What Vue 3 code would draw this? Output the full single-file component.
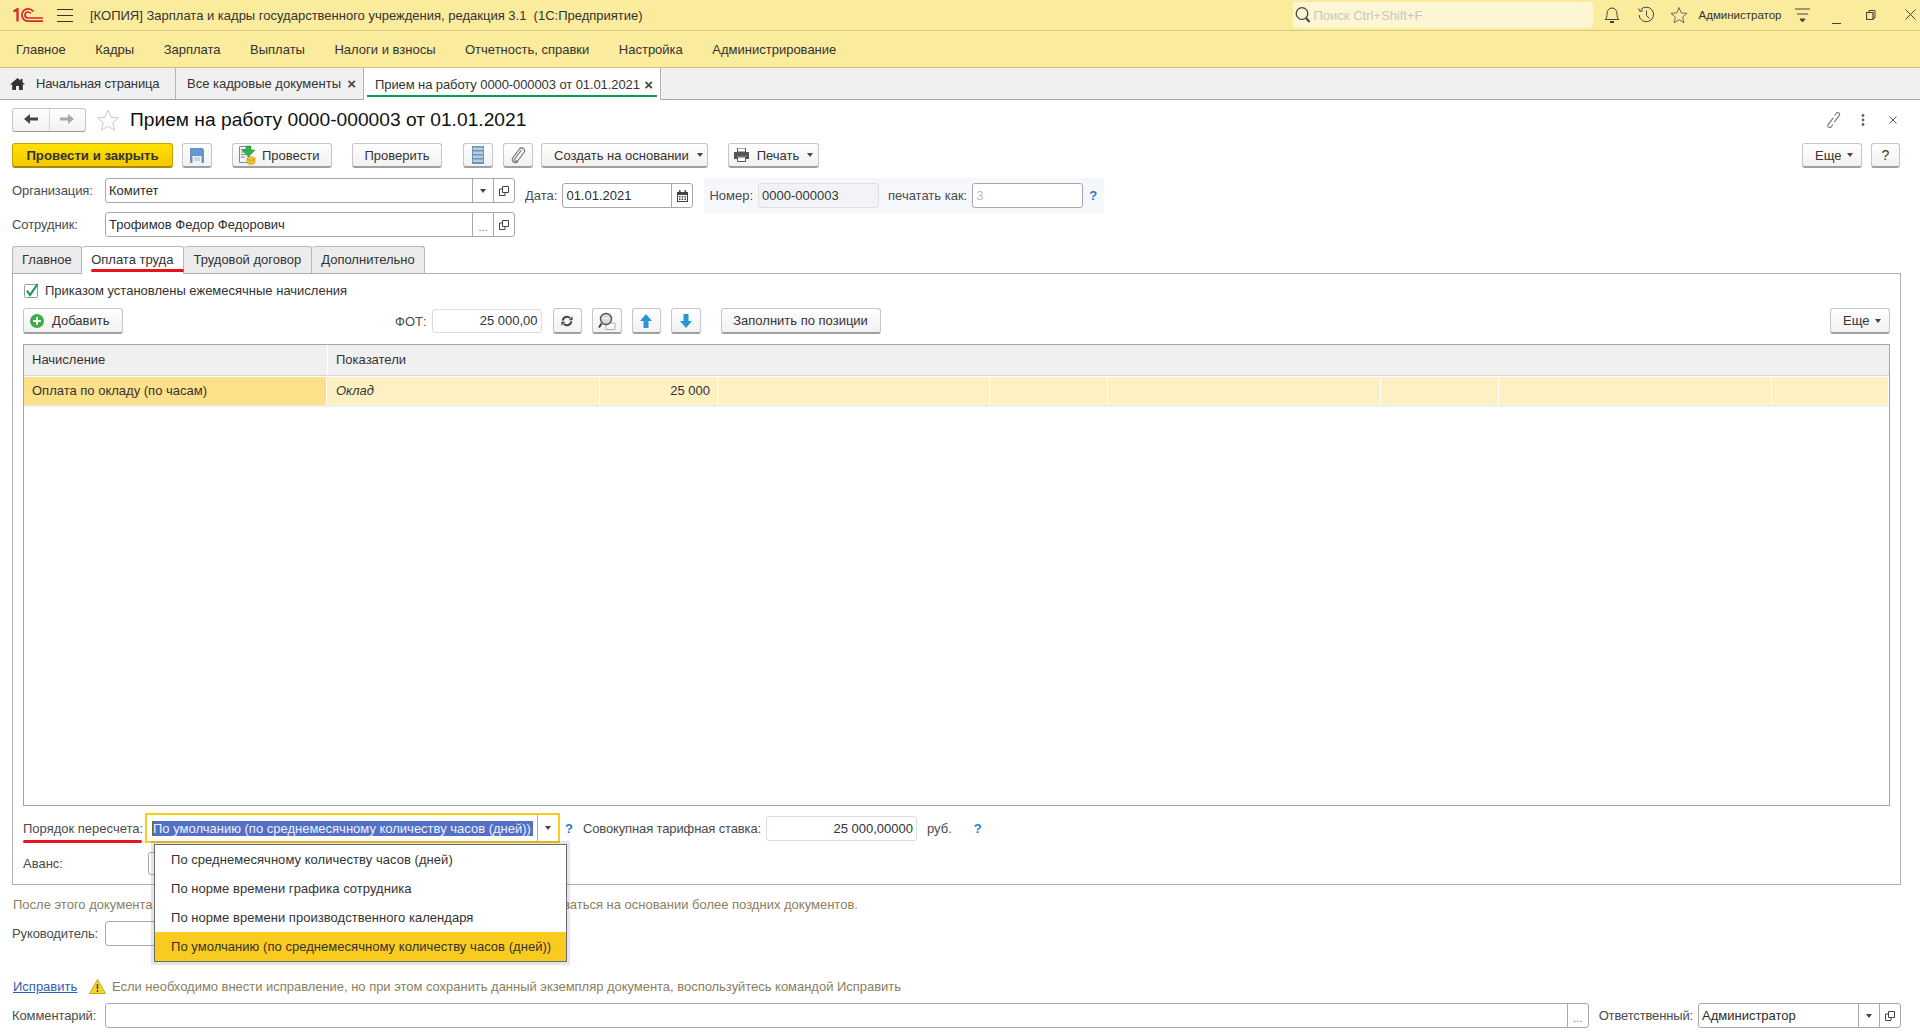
<script setup>
const menu = ['Главное', 'Кадры', 'Зарплата', 'Выплаты', 'Налоги и взносы', 'Отчетность, справки', 'Настройка', 'Администрирование']
const formTabs = ['Главное', 'Оплата труда', 'Трудовой договор', 'Дополнительно']
const rowCells = ['', '', '', '', '', '', '']
const options = [
  'По среднемесячному количеству часов (дней)',
  'По норме времени графика сотрудника',
  'По норме времени производственного календаря',
  'По умолчанию (по среднемесячному количеству часов (дней))'
]
</script>

<template>
  <svg class="sprite" width="0" height="0">
    <symbol id="copy" viewBox="0 0 12 12"><path d="M4.500 1.500h6v6h-6zM4.500 4H1.500v6.500H7V7.500" fill="none" stroke="#444" /></symbol>
    <symbol id="star" viewBox="0 0 24 24"><path d="M12 2l3 7.200 7.600.6-5.800 5 1.800 7.400L12 18.300l-6.600 3.900 1.800-7.400-5.800-5L9 9.200z" fill="none" stroke="currentColor" /></symbol>
  </svg>

  <div class="app">
    <header class="titlebar">
      <svg class="logo" width="30" height="14" viewBox="0 0 30 14" fill="none" stroke="#d9262c" stroke-width="1.700">
        <path d="M.5 3.500L4.500 1.200V13.500" stroke-width="2.300" />
        <path d="M20.500 3.500C19 1.600 17 .9 15 .9a6 6 0 0 0 0 12.200H30" />
        <path d="M18 5.500C17.200 4.500 16 4 15 4a3 3 0 0 0 0 6H30" />
      </svg>
      <div class="burger"><i></i><i></i><i></i></div>
      <div class="app-title">[КОПИЯ] Зарплата и кадры государственного учреждения, редакция 3.1 &nbsp;(1С:Предприятие)</div>
      <div class="search">
        <svg width="16" height="18" viewBox="0 0 16 18" fill="none" stroke="#444" stroke-width="1.300">
          <circle cx="7" cy="7.500" r="5.800" /><path d="M11 12l3.500 4" stroke-width="2" />
        </svg>
        <span>Поиск Ctrl+Shift+F</span>
      </div>
      <svg class="bell" width="16" height="18" viewBox="0 0 16 18" fill="none" stroke="#444">
        <path d="M1 13.500c2-1.500 2-3 2-6 0-3 2-5.500 5-5.500s5 2.500 5 5.500c0 3 0 4.500 2 6z" /><path d="M6 16h4" stroke-width="2" />
      </svg>
      <svg class="hist" width="18" height="18" viewBox="0 0 18 18" fill="none" stroke="#444">
        <path d="M3.500 4A7.300 7.300 0 1 1 2 9" /><path d="M1.500 2.500L3 5.500 6 4.500" /><path d="M9.500 4.500V9.500L12.500 12.500" />
      </svg>
      <svg class="tstar" width="18" height="18" style="color:#444"><use href="#star" /></svg>
      <span class="user">Администратор</span>
      <svg class="filter" width="16" height="18" viewBox="0 0 16 18" stroke="#444">
        <path d="M0 3h15M2 8h11" /><path d="M5 13h5l-2.500 3z" fill="#444" />
      </svg>
      <svg class="winbtn" width="9" height="18" viewBox="0 0 9 18"><path d="M0 17.500h9" stroke="#444" /></svg>
      <svg class="winbtn restore" width="10" height="18" viewBox="0 0 10 18" fill="none" stroke="#444">
        <path d="M3 6.500V4.500H9V12H7" /><path d="M.5 6.500H7V13.500H.5z" stroke-width="1.200" />
      </svg>
      <svg class="winbtn close" width="11" height="18" viewBox="0 0 11 18" stroke="#444"><path d="M.5 3.500l10 10M10.500 3.500l-10 10" /></svg>
    </header>

    <nav class="menubar">
      <span v-for="m in menu" :key="m">{{ m }}</span>
    </nav>

    <div class="pagetabs">
      <div class="ptab home">
        <svg width="15" height="14" viewBox="0 0 15 14" fill="#333"><path d="M7.500 1L0 7.500h2.200V13h3.800V9h3v4h3.800V7.500H15l-2.500-2.200V2h-2v1.600z" /></svg>
        <span>Начальная страница</span>
      </div>
      <div class="ptab">
        <span>Все кадровые документы</span><b class="x">×</b>
      </div>
      <div class="ptab active">
        <span>Прием на работу 0000-000003 от 01.01.2021</span><b class="x">×</b>
      </div>
    </div>

    <main class="form">
      <div class="head">
        <div class="navbtns">
          <button class="nav">
            <svg width="14" height="12" viewBox="0 0 14 12" fill="#444"><path d="M0 6l6-5v3.400h8v3.200H6V11z" /></svg>
          </button>
          <button class="nav">
            <svg width="14" height="12" viewBox="0 0 14 12" fill="#aaa"><path d="M14 6L8 1v3.400H0v3.200h8V11z" /></svg>
          </button>
        </div>
        <svg class="fav" width="24" height="24" style="color:#c9c9c9"><use href="#star" /></svg>
        <h1>Прием на работу 0000-000003 от 01.01.2021</h1>
        <div class="head-right">
          <svg width="18" height="18" viewBox="0 0 18 18" fill="none" stroke="#777" stroke-width="1.100">
            <path d="M9.500 4.500l2-2.500c1.200-1.200 3.200-.2 3.200 1.300 0 .5-.2 1-.5 1.400l-5 6.500" />
            <path d="M8 13.500l-2 2.500c-1.200 1.200-3.200.2-3.200-1.300 0-.5.2-1 .5-1.400l5-6.500" />
          </svg>
          <svg class="dots" width="4" height="12" viewBox="0 0 4 12" fill="#666"><circle cx="2" cy="1.500" r="1.400" /><circle cx="2" cy="6" r="1.400" /><circle cx="2" cy="10.500" r="1.400" /></svg>
          <svg class="hclose" width="8" height="8" viewBox="0 0 8 8" stroke="#555"><path d="M.5.500l7 7M7.500.500l-7 7" /></svg>
        </div>
      </div>

      <div class="cmdbar">
        <button class="btn primary">Провести и закрыть</button>
        <button class="btn icon save">
          <svg width="14" height="15" viewBox="0 0 14 15">
            <path d="M0 0h12.500L14 1.500V15H0z" fill="#6a94c0" /><path d="M2.500 1h8.500v5H2.500z" fill="#5e9bd8" /><path d="M2.500 8h9v7h-9z" fill="#eef2f6" /><path d="M4 10h6M4 12h6" stroke="#a9b8c8" />
          </svg>
        </button>
        <button class="btn post">
          <svg width="17" height="20" viewBox="0 0 17 20">
            <path d="M.5 1.500h9v16h-9z" fill="#f4f4f4" stroke="#888" />
            <path d="M2 4.500h6M2 7h4M2 9.500h5M2 12h4" stroke="#8a8a8a" />
            <path d="M7 1h5v4h4l-6.500 7L3 5h4z" fill="#32b04a" stroke="#1f8a35" stroke-width=".5" />
            <ellipse cx="12" cy="13.500" rx="4" ry="1.800" fill="#f2c63a" stroke="#b08b12" stroke-width=".5" />
            <path d="M8 13.500v4c0 1 1.800 1.800 4 1.800s4-.8 4-1.800v-4c0 1-1.800 1.800-4 1.800s-4-.8-4-1.800z" fill="#efc02e" stroke="#b08b12" stroke-width=".5" />
          </svg>
          <span>Провести</span>
        </button>
        <button class="btn check">Проверить</button>
        <button class="btn icon list">
          <svg width="12" height="18" viewBox="0 0 12 18">
            <path d="M0 0h12v18H0z" fill="#6f93b8" /><path d="M1 1.500h10v2.500H1zM1 5.500h10V8H1zM1 9.500h10V12H1zM1 13.500h10V16H1z" fill="#b8cde3" />
          </svg>
        </button>
        <button class="btn icon clip">
          <svg width="15" height="18" viewBox="0 0 15 18" fill="none" stroke="#777" stroke-width="1.200">
            <path d="M10.500 4L4 12.500c-1.500 2.200 1.300 4 3 2l6-8c2-3-2-6.500-4.500-3.500L2 11.500c-2.200 3.500 2 7 5 4" />
          </svg>
        </button>
        <button class="btn create">Создать на основании <i class="caret"></i></button>
        <button class="btn print">
          <svg width="15" height="14" viewBox="0 0 15 14">
            <path d="M3.500 0h8v4h-8z" fill="#fff" stroke="#555" /><path d="M0 4h15v7h-3V8.500H3V11H0z" fill="#555" /><path d="M3.500 9h8v4.500h-8z" fill="#fff" stroke="#555" />
          </svg>
          <span>Печать</span><i class="caret"></i>
        </button>
        <button class="btn more">Еще <i class="caret"></i></button>
        <button class="btn help">?</button>
      </div>

      <div class="fields">
        <div class="fields-left">
          <div class="frow">
            <label class="flabel">Организация:</label>
            <div class="input grow">
              <span class="val">Комитет</span>
              <span class="cell"><i class="caret"></i></span>
              <span class="cell"><svg width="12" height="12"><use href="#copy" /></svg></span>
            </div>
          </div>
          <div class="frow emp">
            <label class="flabel">Сотрудник:</label>
            <div class="input grow">
              <span class="val">Трофимов Федор Федорович</span>
              <span class="cell dots3">...</span>
              <span class="cell"><svg width="12" height="12"><use href="#copy" /></svg></span>
            </div>
          </div>
        </div>
        <div class="date">
          <label>Дата:</label>
          <div class="input date-in">
            <span class="val">01.01.2021</span>
            <span class="cell">
              <svg width="11" height="12" viewBox="0 0 11 12" fill="#444"><path d="M0 2h11v10H0zM1 5v6h9V5zM2 0h1.500v2H2zM7.500 0H9v2H7.500z" /><path d="M2 6h1.500v1.500H2zM4.700 6h1.500v1.500H4.700zM7.500 6H9v1.500H7.500zM2 8.500h1.500V10H2zM4.700 8.500h1.500V10H4.700zM7.500 8.500H9V10H7.500z" /></svg>
            </span>
          </div>
        </div>
        <div class="number">
          <label>Номер:</label>
          <div class="num-in">0000-000003</div>
          <label class="print-as">печатать как:</label>
          <div class="input print-in"><span class="val ghost">3</span></div>
          <span class="q">?</span>
        </div>
      </div>

      <div class="ftabs">
        <div v-for="(t, i) in formTabs" :key="t" class="ftab" :class="{ on: i === 1 }">{{ t }}</div>
      </div>

      <section class="panel">
        <div class="checkrow">
          <svg width="15" height="15" viewBox="0 0 15 15" fill="none">
            <rect x=".5" y="1.500" width="13" height="13" rx="1" stroke="#999" fill="#fff" />
            <path d="M3 7.500l3 4.500L13.500 1" stroke="#1d9a4f" stroke-width="2.200" />
          </svg>
          <span>Приказом установлены ежемесячные начисления</span>
        </div>

        <div class="tblbar">
          <button class="btn add">
            <svg width="14" height="14" viewBox="0 0 14 14"><circle cx="7" cy="7" r="7" fill="#3fae49" /><path d="M7 3.200v7.600M3.200 7h7.600" stroke="#fff" stroke-width="2" /></svg>
            <span>Добавить</span>
          </button>
          <label class="fot">ФОТ:</label>
          <div class="fot-in">25 000,00</div>
          <button class="btn icon first-tool">
            <svg width="12" height="12" viewBox="0 0 14 14" fill="none" stroke="#444" stroke-width="2.400">
              <path d="M2 6.500A5 5 0 0 1 10.500 3.500" /><path d="M12 7.500A5 5 0 0 1 3.500 10.500" />
              <path d="M9 6h4.500V1.500zM5 8H.5v4.500z" fill="#444" stroke="none" />
            </svg>
          </button>
          <button class="btn icon">
            <svg width="18" height="18" viewBox="0 0 18 18" fill="none">
              <path d="M8 11h9v6.500H8z" fill="#fff" stroke="#9cb5cc" />
              <circle cx="8" cy="7" r="5.500" fill="#d9d9d9" stroke="#555" stroke-width="1.400" />
              <path d="M3.500 11.500L1 15.500" stroke="#444" stroke-width="2" />
              <path d="M4.500 6.500h7" stroke="#fff" />
            </svg>
          </button>
          <button class="btn icon">
            <svg width="12" height="14" viewBox="0 0 12 14"><path d="M6 0l6 7H8.500v7h-5V7H0z" fill="#2b93d6" /></svg>
          </button>
          <button class="btn icon">
            <svg width="12" height="14" viewBox="0 0 12 14"><path d="M6 14L0 7h3.500V0h5v7H12z" fill="#2b93d6" /></svg>
          </button>
          <button class="btn fill">Заполнить по позиции</button>
          <button class="btn more">Еще <i class="caret"></i></button>
        </div>

        <div class="table">
          <div class="thead">
            <div>Начисление</div>
            <div>Показатели</div>
          </div>
          <div class="trow">
            <div class="first">Оплата по окладу (по часам)</div>
            <div class="it">Оклад</div>
            <div class="sum">25 000</div>
            <div v-for="(c, i) in rowCells" :key="i">{{ c }}</div>
          </div>
        </div>

        <div class="recalc">
          <label class="rlabel">Порядок пересчета:</label>
          <div class="focus">
            <span class="sel">По умолчанию (по среднемесячному количеству часов (дней))</span>
            <span class="focus-arrow"><i class="caret"></i></span>
          </div>
          <span class="q q1">?</span>
          <label class="total-l">Совокупная тарифная ставка:</label>
          <div class="total-in">25 000,00000</div>
          <span class="rub">руб.</span>
          <span class="q q2">?</span>
        </div>

        <div class="avans">
          <label>Аванс:</label>
          <div class="input avans-in"></div>
        </div>

        <div class="popup">
          <div v-for="(o, i) in options" :key="o" class="opt" :class="{ cur: i === 3 }">{{ o }}</div>
        </div>
      </section>

      <p class="note">После этого документа в их учете не будут изменяться данные, которые должны рассчитываться на основании более поздних документов.</p>

      <div class="frow boss">
        <label class="flabel">Руководитель:</label>
        <div class="input boss-in"></div>
      </div>

      <div class="fix">
        <a class="link">Исправить</a>
        <svg width="17" height="15" viewBox="0 0 17 15"><path d="M8.500.500l8 14H.5z" fill="#f5d327" stroke="#c9a825" /><path d="M8.500 5v5M8.500 11v2" stroke="#444" stroke-width="1.500" /></svg>
        <span>Если необходимо внести исправление, но при этом сохранить данный экземпляр документа, воспользуйтесь командой Исправить</span>
      </div>

      <div class="frow comment">
        <label class="flabel">Комментарий:</label>
        <div class="input grow">
          <span class="val"></span>
          <span class="cell dots3">...</span>
        </div>
        <label class="resp">Ответственный:</label>
        <div class="input resp-in">
          <span class="val">Администратор</span>
          <span class="cell"><i class="caret"></i></span>
          <span class="cell"><svg width="12" height="12"><use href="#copy" /></svg></span>
        </div>
      </div>
    </main>
  </div>
</template>

<style>
html, body { margin: 0; background: #fff; }
</style>

<style scoped>
.sprite { position: absolute; }
.app {
  width: 1920px;
  height: 1034px;
  overflow: hidden;
  background: #fff;
  color: #333;
  font: 13px "Liberation Sans", Arial, sans-serif;
}
label { color: #4b4b4b; white-space: nowrap; }

.titlebar {
  display: flex;
  align-items: center;
  height: 30px;
  border-bottom: 1px solid #d6c87f;
  background: #fbeb9d;
}
.logo { margin-left: 13px; }
.burger { margin-left: 14px; width: 16px; }
.burger i { display: block; height: 1px; background: #333; margin: 5px 0; }
.app-title { margin-left: 17px; white-space: nowrap; }
.search {
  display: flex;
  align-items: center;
  margin-left: auto;
  width: 300px;
  height: 26px;
  border-radius: 3px;
  background: #fdf6d4;
  color: #c8c8c0;
  box-sizing: border-box;
  padding-left: 2px;
  gap: 3px;
}
.bell { margin-left: 11px; }
.hist { margin-left: 17px; }
.tstar { margin-left: 15px; }
.user { margin-left: 11px; font-size: 11.500px; }
.filter { margin-left: 13px; }
.winbtn { margin-left: 21.500px; }
.winbtn.restore { margin-left: 25px; }
.winbtn.close { margin-left: 29px; margin-right: 4px; }

.menubar {
  display: flex;
  align-items: center;
  gap: 29.500px;
  height: 36px;
  padding-left: 16px;
  border-bottom: 1px solid #cfc27f;
  background: #fbeb9d;
}

.pagetabs {
  display: flex;
  height: 31px;
  border-bottom: 1px solid #a8a8a8;
  background: #f0f0f0;
}
.ptab {
  display: flex;
  align-items: center;
  height: 31px;
  padding: 0 7px 0 11px;
  border-right: 1px solid #b5b5b5;
  white-space: nowrap;
  box-sizing: border-box;
  position: relative;
}
.ptab.home { width: 176px; padding-left: 10px; gap: 11px; letter-spacing: -.13px; }
.ptab:nth-child(2) { width: 188px; }
.ptab.active { width: 297px; background: #fff; height: 32px; }
.ptab.active span { letter-spacing: -.09px; }
.ptab.active::after {
  content: '';
  position: absolute;
  left: 3px;
  right: 3px;
  bottom: 3px;
  height: 2px;
  background: #0f9a50;
}
.x { margin-left: auto; font-size: 15px; color: #444; }

.form { padding: 0 19px 0 12px; }
.head {
  display: flex;
  align-items: center;
  height: 24px;
  margin-top: 8px;
}
.navbtns {
  display: flex;
  width: 74px;
  height: 24px;
  border: 1px solid #c4c4c4;
  border-bottom-color: #999;
  border-radius: 3px;
  box-sizing: border-box;
  background: linear-gradient(#fff, #f1f1f1);
}
.nav {
  flex: 1;
  padding: 0;
  border: 0;
  background: none;
}
.nav:first-child { border-right: 1px solid #d5d5d5; }
.fav { margin-left: 10px; }
h1 {
  margin: 0 0 0 10px;
  font-size: 19.200px;
  font-weight: 400;
  color: #111;
  white-space: nowrap;
}
.head-right { display: flex; align-items: center; margin-left: auto; }
.dots { margin-left: 18px; }
.hclose { margin-left: 24px; margin-right: 4px; }

.cmdbar {
  display: flex;
  margin-top: 11px;
  height: 25px;
}
.btn {
  display: flex;
  align-items: center;
  justify-content: center;
  gap: 8px;
  height: 25px;
  padding: 0;
  box-sizing: border-box;
  border: 1px solid #c6c6c6;
  border-bottom: 2px solid #a0a0a0;
  border-radius: 3px;
  background: linear-gradient(#fff, #f1f1f1);
  color: #333;
  font: 13px "Liberation Sans", Arial, sans-serif;
  white-space: nowrap;
}
.icon { width: 30px; margin-left: 10px; }
.primary {
  width: 161px;
  border-color: #c6a400;
  border-bottom-color: #a88b00;
  background: linear-gradient(#ffe100, #f3c800);
  font-size: 13.200px;
  font-weight: 700;
}
.save { margin-left: 9px; }
.post { width: 100px; margin-left: 20px; justify-content: flex-start; padding-left: 6px; gap: 6px; }
.check { width: 90px; margin-left: 20px; }
.list { margin-left: 21px; }
.create { width: 167px; margin-left: 8px; justify-content: flex-start; padding-left: 12px; }
.print { width: 91px; margin-left: 20px; }
.more { width: 60px; margin-left: auto; justify-content: flex-start; padding-left: 12px; gap: 6px; }
.help { width: 29px; margin: 0 1px 0 9px; font-size: 14px; }
.caret {
  display: inline-block;
  width: 0;
  height: 0;
  border: 3px solid transparent;
  border-top: 4px solid #444;
  border-bottom: 0;
}

.fields { display: flex; align-items: flex-start; height: 59px; margin-top: 10px; }
.fields-left { width: 503px; }
.frow { display: flex; align-items: center; }
.emp { margin-top: 9px; }
.flabel { width: 93px; flex: none; letter-spacing: -.1px; }
.input {
  display: flex;
  align-items: stretch;
  height: 25px;
  box-sizing: border-box;
  border: 1px solid #a8a8a8;
  border-radius: 3px;
  background: #fff;
}
.grow { flex: 1; }
.val { flex: 1; padding-left: 3px; line-height: 23px; color: #2c2c2c; white-space: nowrap; }
.cell {
  display: flex;
  align-items: center;
  justify-content: center;
  width: 21px;
  box-sizing: border-box;
  border-left: 1px solid #a8a8a8;
}
.dots3 { color: #666; align-items: flex-end; padding-bottom: 3px; font-size: 11px; }
.date { display: flex; align-items: center; gap: 5px; height: 25px; margin: 5px 0 0 10px; }
.date-in { width: 131px; }
.number {
  display: flex;
  align-items: center;
  height: 35px;
  margin-left: 11px;
  padding-left: 5px;
  width: 400px;
  box-sizing: border-box;
  background: #f5f7fc;
}
.num-in {
  width: 121px;
  height: 25px;
  box-sizing: border-box;
  margin-left: 5px;
  padding-left: 3px;
  line-height: 23px;
  border: 1px solid #dcdfe3;
  border-radius: 3px;
  background: #f2f3f6;
}
.print-as { margin-left: 9px; }
.print-in { width: 111px; margin-left: 5px; }
.ghost { color: #bbb; }
.q { color: #1a7fc4; font-weight: 700; font-size: 13px; }
.number .q { margin-left: 6px; }

.ftabs { display: flex; height: 27px; margin-top: 9px; }
.ftab {
  display: flex;
  align-items: center;
  box-sizing: border-box;
  height: 27px;
  padding: 0 9.500px 2px;
  border: 1px solid #b8b8b8;
  border-bottom: 0;
  border-left: 0;
  border-radius: 3px 3px 0 0;
  background: #ececec;
  white-space: nowrap;
}
.ftab:first-child { border-left: 1px solid #b8b8b8; padding: 0 9px 2px; }
.ftab.on {
  position: relative;
  background: #fff;
  height: 28px;
  z-index: 1;
}
.ftab.on::after {
  content: '';
  position: absolute;
  left: 9px;
  right: -1px;
  bottom: 2px;
  height: 3px;
  border-radius: 2px;
  background: #e6141e;
}

.panel {
  position: relative;
  height: 612px;
  box-sizing: border-box;
  padding: 0 10px;
  border: 1px solid #b0b0b0;
}
.checkrow { display: flex; align-items: center; gap: 6px; height: 15px; margin: 9px 0 0 1px; }
.tblbar { display: flex; align-items: center; height: 26px; margin-top: 10px; }
.tblbar .btn { height: 26px; }
.add { width: 100px; gap: 8px; justify-content: flex-start; padding-left: 6px; }
.fot { margin-left: 272px; }
.fot-in {
  width: 110px;
  height: 24px;
  box-sizing: border-box;
  margin-left: 5px;
  padding-right: 3px;
  line-height: 22px;
  text-align: right;
  border: 1px solid #dcdcdc;
  border-radius: 3px;
}
.tblbar .icon { width: 29.500px; margin-left: 10px; }
.tblbar .first-tool { margin-left: 11px; }
.fill { width: 160px; margin-left: 20px; }

.table {
  height: 462px;
  margin-top: 10px;
  box-sizing: border-box;
  border: 1px solid #a5a5a5;
}
.thead {
  display: grid;
  grid-template-columns: 303px 1fr;
  height: 30px;
  background: #f0f0f0;
  border-bottom: 1px solid #d8d8d8;
}
.thead div { line-height: 30px; padding-left: 8px; }
.thead div + div { border-left: 1px solid #fff; }
.trow {
  display: grid;
  grid-template-columns: 303px 273px 118px 272px 118px 273px 118px 273px 1fr;
  height: 28px;
  margin-top: 1px;
  background: #fdf1c4;
  border-bottom: 2px solid #eee;
}
.trow div { line-height: 27px; padding: 0 8px; border-right: 1px solid #fff; }
.trow .first { background: #fce08a; color: #333; }
.trow .it { font-style: italic; padding-left: 9px; }
.sum { text-align: right; padding-right: 7px !important; }

.recalc { display: flex; align-items: center; height: 30px; margin-top: 7px; }
.rlabel { width: 122px; flex: none; position: relative; }
.rlabel::after {
  content: '';
  position: absolute;
  left: 0;
  right: 3px;
  bottom: -7px;
  height: 3px;
  border-radius: 2px;
  background: #e6141e;
}
.focus {
  display: flex;
  align-items: center;
  width: 415px;
  height: 30px;
  box-sizing: border-box;
  padding-left: 5px;
  border: 2px solid #f9cb1f;
}
.sel {
  width: 380px;
  height: 15px;
  line-height: 15px;
  border-left: 1px solid #6b6530;
  background: #5470c4;
  color: #eef1ff;
  white-space: nowrap;
  overflow: hidden;
}
.focus-arrow {
  display: flex;
  align-items: center;
  justify-content: center;
  width: 20px;
  height: 26px;
  margin-left: 4px;
  border-left: 1px solid #a8a8a8;
}
.q1 { margin-left: 5px; }
.total-l { margin-left: 10px; letter-spacing: -.13px; }
.total-in {
  width: 151px;
  height: 25px;
  box-sizing: border-box;
  margin-left: 5px;
  padding-right: 3px;
  line-height: 23px;
  text-align: right;
  border: 1px solid #dcdcdc;
  border-radius: 3px;
}
.rub { margin-left: 10px; color: #4b4b4b; }
.q2 { margin-left: 22px; }

.avans { display: flex; align-items: center; height: 23px; margin-top: 9px; }
.avans label { width: 125px; }
.avans-in { width: 200px; height: 23px; }

.popup {
  position: absolute;
  left: 141px;
  top: 570px;
  width: 413px;
  box-sizing: border-box;
  border: 1px solid #6a6a6a;
  background: #fff;
  box-shadow: 0 0 0 3px rgba(0, 0, 0, .1);
  z-index: 2;
}
.opt {
  height: 29px;
  line-height: 29px;
  padding-left: 16px;
  color: #333;
  letter-spacing: .04px;
  white-space: nowrap;
}
.opt.cur { background: #f9cb1f; height: 29px; }

.note { margin: 12px 0 0 1px; height: 15px; line-height: 15px; color: #8a8060; white-space: nowrap; }
.boss { margin-top: 9px; }
.boss-in { width: 200px; }
.fix { display: flex; align-items: center; height: 18px; margin-top: 31px; color: #8a8060; }
.link { width: 76px; margin-left: 1px; color: #2a5fb8; text-decoration: underline; }
.fix span { margin-left: 6px; letter-spacing: -.03px; white-space: nowrap; }
.comment { margin-top: 8px; }
.resp { margin-left: 10px; letter-spacing: -.15px; }
.resp-in { width: 203px; margin-left: 5px; }
</style>
